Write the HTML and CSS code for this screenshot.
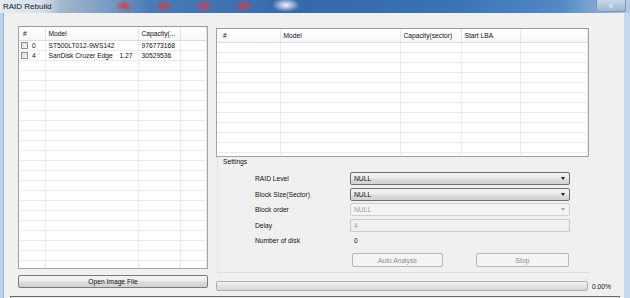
FILE: index.html
```html
<!DOCTYPE html>
<html lang="en">
<head>
  <meta charset="UTF-8">
  <title>RAID Rebuild</title>
  <link rel="stylesheet" href="styles.css">
</head>
<body>

<div class="window">
  <div class="titlebar">
    <span class="title">RAID Rebuild</span>
    <span class="close">x</span>
  </div>

  <div class="frame">
    <div class="client">
      <div class="content">

        <div class="left-col">
          <div class="list disks">
            <table class="grid">
              <colgroup><col style="width:26px"><col style="width:93px"><col style="width:42px"><col></colgroup>
              <thead>
                <tr><th class="first">#</th><th>Model</th><th>Capacity(...</th><th></th></tr>
              </thead>
              <tbody>
                <tr><td class="first"><span class="check"></span>0</td><td>ST500LT012-9WS142</td><td>976773168</td><td></td></tr>
                <tr><td class="first"><span class="check"></span>4</td><td><span class="rev">1.27</span>SanDisk Cruzer Edge</td><td>30529536</td><td></td></tr>
                <tr><td></td><td></td><td></td><td></td></tr>
                <tr><td></td><td></td><td></td><td></td></tr>
                <tr><td></td><td></td><td></td><td></td></tr>
                <tr><td></td><td></td><td></td><td></td></tr>
                <tr><td></td><td></td><td></td><td></td></tr>
                <tr><td></td><td></td><td></td><td></td></tr>
                <tr><td></td><td></td><td></td><td></td></tr>
                <tr><td></td><td></td><td></td><td></td></tr>
                <tr><td></td><td></td><td></td><td></td></tr>
                <tr><td></td><td></td><td></td><td></td></tr>
                <tr><td></td><td></td><td></td><td></td></tr>
                <tr><td></td><td></td><td></td><td></td></tr>
                <tr><td></td><td></td><td></td><td></td></tr>
                <tr><td></td><td></td><td></td><td></td></tr>
                <tr><td></td><td></td><td></td><td></td></tr>
                <tr><td></td><td></td><td></td><td></td></tr>
                <tr><td></td><td></td><td></td><td></td></tr>
                <tr><td></td><td></td><td></td><td></td></tr>
                <tr><td></td><td></td><td></td><td></td></tr>
                <tr><td></td><td></td><td></td><td></td></tr>
                <tr><td></td><td></td><td></td><td></td></tr>
              </tbody>
            </table>
          </div>
          <button class="btn open">Open Image File</button>
        </div>

        <div class="right-col">
          <div class="list parts">
            <table class="grid">
              <colgroup><col style="width:63px"><col style="width:120px"><col style="width:61px"><col style="width:59px"><col></colgroup>
              <thead>
                <tr><th class="first">#</th><th>Model</th><th>Capacity(sector)</th><th>Start LBA</th><th></th></tr>
              </thead>
              <tbody>
                <tr><td></td><td></td><td></td><td></td><td></td></tr>
                <tr><td></td><td></td><td></td><td></td><td></td></tr>
                <tr><td></td><td></td><td></td><td></td><td></td></tr>
                <tr><td></td><td></td><td></td><td></td><td></td></tr>
                <tr><td></td><td></td><td></td><td></td><td></td></tr>
                <tr><td></td><td></td><td></td><td></td><td></td></tr>
                <tr><td></td><td></td><td></td><td></td><td></td></tr>
                <tr><td></td><td></td><td></td><td></td><td></td></tr>
                <tr><td></td><td></td><td></td><td></td><td></td></tr>
                <tr><td></td><td></td><td></td><td></td><td></td></tr>
                <tr><td></td><td></td><td></td><td></td><td></td></tr>
                <tr><td></td><td></td><td></td><td></td><td></td></tr>
              </tbody>
            </table>
          </div>

          <div class="settings">
            <div class="settings-label">Settings</div>
            <div class="form">
              <span class="lbl">RAID Level</span>
              <div class="combo">NULL<span class="arrow"></span></div>
              <span class="lbl">Block Size(Sector)</span>
              <div class="combo">NULL<span class="arrow"></span></div>
              <span class="lbl">Block order</span>
              <div class="combo disabled">NULL<span class="arrow"></span></div>
              <span class="lbl">Delay</span>
              <div class="field disabled">4</div>
              <span class="lbl">Number of disk</span>
              <div class="value">0</div>
            </div>
            <div class="actions">
              <button class="btn disabled auto">Auto Analyse</button>
              <button class="btn disabled stop">Stop</button>
            </div>
          </div>

          <div class="progress-row">
            <div class="progress"></div>
            <span class="percent">0.00%</span>
          </div>
        </div>

      </div>
      <div class="statusbar"></div>
    </div>
  </div>
</div>

</body>
</html>
```

FILE: styles.css
```css
* { box-sizing: border-box; }
body { margin: 0; font-family: "Liberation Sans", Arial, sans-serif; font-size: 6.7px; color: #111; background: #fff; }

.window { width: 630px; height: 298px; display: flex; flex-direction: column; overflow: hidden; background: linear-gradient(90deg, #bcd3ec, #c6d8ec); }

/* title bar, aero glass look */
.titlebar {
  height: 13px; flex: none; display: flex; align-items: center; justify-content: space-between; padding-left: 3px;
  background:
    radial-gradient(ellipse 9px 6px at 124px 6px, rgba(214,60,70,.9), rgba(214,60,70,0)),
    radial-gradient(ellipse 9px 6px at 164px 6px, rgba(214,60,70,.9), rgba(214,60,70,0)),
    radial-gradient(ellipse 9px 6px at 204px 6px, rgba(214,60,70,.9), rgba(214,60,70,0)),
    radial-gradient(ellipse 9px 6px at 244px 6px, rgba(214,60,70,.9), rgba(214,60,70,0)),
    radial-gradient(ellipse 14px 7px at 286px 5px, rgba(255,255,255,.95), rgba(255,255,255,0)),
    linear-gradient(90deg, #e2eaf3 0, #d6e0eb 42px, #a3b7cd 62px, #7c9cc3 105px, #4a7bb7 150px, #3469ab 300px, #3a72b6 450px, #5288c5 560px, #86abd6 600px, #b3cbe5 630px);
}
.title { font-size: 8px; color: #141414; }
.close {
  width: 30px; height: 12px; margin-right: 4px; align-self: flex-start; text-align: center; font-size: 8px; line-height: 11px; color: #f4f7fb;
  background: linear-gradient(#c8d7e8, #9fb8d4); border: 1px solid #7f98b6; border-top: none; border-radius: 0 0 3px 3px;
}

.frame { flex: 1; display: flex; padding: 0 6px 0 3px; min-height: 0; }
.client { flex: 1; display: flex; flex-direction: column; background: #f0f0f0; border-left: 1px solid #9fb0c4; min-height: 0; }
.content { display: flex; padding: 13px 0 0 14px; }

.left-col { width: 190px; display: flex; flex-direction: column; margin-right: 8px; }
.right-col { width: 400px; padding-top: 2px; }

/* list views */
.list { background: #fff; border: 1px solid #a3a3a3; border-top-color: #9a9a9a; overflow: hidden; }
.disks { height: 243px; }
.parts { width: 373px; height: 129px; }
.grid { border-collapse: collapse; table-layout: fixed; width: 100%; }
.grid th { height: 13px; padding: 0 3px; text-align: left; font-weight: normal; white-space: nowrap; overflow: hidden;
  background: linear-gradient(#fff, #f6f7f9); border-right: 1px solid #e4e5e7; border-bottom: 1px solid #dcdde0; }
.grid td { height: 10px; padding: 0 3px; line-height: 9px; white-space: nowrap; overflow: hidden;
  border-right: 1px solid #ebebeb; border-bottom: 1px solid #ebebeb; }
.disks .grid th.first { padding-left: 4px; }
.disks .grid td.first { padding-left: 2px; color: #111; }
.parts .grid th.first { padding-left: 6px; }
.check { display: inline-block; width: 7px; height: 7px; margin-right: 4px; vertical-align: -1px;
  border: 1px solid #8e8f8f; background: linear-gradient(135deg, #dcdcdc, #f6f6f6); }
.rev { float: right; padding-right: 2px; }

/* buttons */
.btn { font-family: inherit; font-size: 6.7px; padding: 0; border: 1px solid #7a7a7a; border-radius: 2px; color: #111;
  background: linear-gradient(#f3f3f3, #ececec 48%, #dddddd 52%, #d0d0d0); }
.btn.disabled { color: #8c8c8c; border-color: #b8b8b8; background: #f4f4f4; }
.open { margin-top: 6px; height: 13px; width: 190px; }

/* settings group */
.settings { width: 373px; height: 116px; margin-left: 1px; border-left: 1px solid #e3e3e3; border-bottom: 1px solid #dcdcdc; }
.settings-label { padding: 1px 0 0 5px; line-height: 8px; }
.form { display: grid; grid-template-columns: 95px 220px; grid-template-rows: repeat(5, 13px); row-gap: 2.5px; padding-left: 37px; margin-top: 6px; align-items: center; }
.combo { position: relative; height: 13px; padding-left: 3px; line-height: 11px; border: 1px solid #707070; border-radius: 2px;
  background: linear-gradient(#f2f2f2, #ebebeb 48%, #dedede 52%, #d1d1d1); }
.combo .arrow { position: absolute; right: 4px; top: 4px; border-left: 2.5px solid transparent; border-right: 2.5px solid transparent; border-top: 3px solid #1b1b1b; }
.combo.disabled { color: #9a9a9a; border-color: #cfcfcf; background: #f4f4f4; }
.combo.disabled .arrow { border-top-color: #a8a8a8; }
.field { height: 13px; padding-left: 3px; line-height: 11px; border: 1px solid #c9c9c9; border-radius: 1px; background: #f0f0f0; color: #9a9a9a; }
.value { padding-left: 4px; }
.actions { display: flex; gap: 33px; padding-left: 134px; margin-top: 6px; }
.auto { width: 91px; height: 14px; }
.stop { width: 93px; height: 14px; }

/* progress */
.progress-row { display: flex; align-items: center; margin-top: 8px; }
.progress { width: 372px; height: 10px; border: 1px solid #b0b0b0; border-radius: 2px; background: linear-gradient(#f4f4f4, #e3e3e3 50%, #d6d6d6); }
.percent { margin-left: 4px; }

.statusbar { margin: auto 4px 0 6px; height: 2px; border-top: 1px solid #676767; border-left: 1px solid #8a8a8a; border-right: 1px solid #8a8a8a; }
```
